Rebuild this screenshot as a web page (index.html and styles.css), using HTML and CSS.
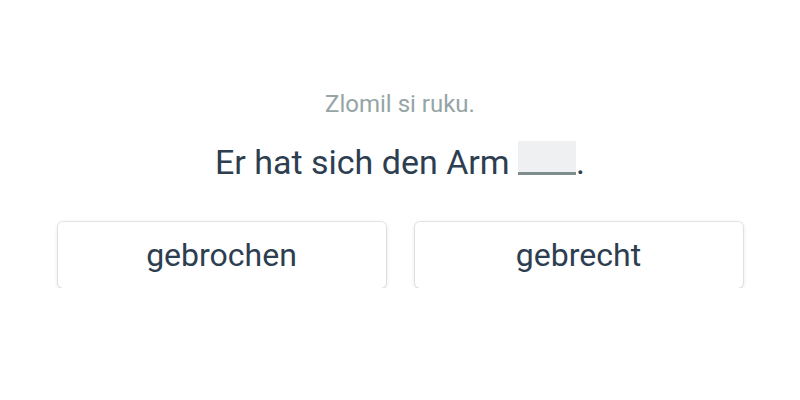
FILE: index.html
```html
<!DOCTYPE html>
<html lang="de">
<head>
  <meta charset="UTF-8">
  <meta name="viewport" content="width=device-width, initial-scale=1.0">
  <title>Cvičení</title>
  <link rel="stylesheet" href="styles.css">
</head>
<body>
  <main class="quiz">
    <p class="hint">Zlomil si ruku.</p>
    <p class="sentence">Er hat sich den Arm <span class="blank"></span>.</p>
    <div class="answers">
      <button class="answer">gebrochen</button>
      <button class="answer">gebrecht</button>
    </div>
  </main>
</body>
</html>
```

FILE: styles.css
```css
*{margin: 0px; padding: 0px; box-sizing: border-box;}
body{
  background: #fff;
  font-family: Roboto, "Liberation Sans", sans-serif;
  color: #2c3e50;
}
.quiz{
  width: 685px;
  margin: 0 auto;
  padding-top: 90px;
  text-align: center;
}
.hint{
  font-size: 24px;
  line-height: 28px;
  color: #95a5a6;
}
.sentence{
  margin-top: 22px;
  font-size: 34px;
  line-height: 44px;
}
/* 빈칸 */
.blank{
  display: inline-block;
  width: 58px; height: 34px;
  background: #eef0f2;
  border-bottom: 3px solid #7f8c8d;
  vertical-align: -1px;
}
.answers{
  margin-top: 38px;
  display: flex;
  gap: 29px;
}
.answer{
  flex: 1;
  height: 66px;
  background: #fff;
  border: none;
  border-radius: 5px;
  box-shadow: 0 0 0 1px rgba(0,0,0,0.07), 0 1px 4px rgba(0,0,0,0.15);
  font-family: inherit;
  font-size: 32px;
  color: #2c3e50;
  cursor: pointer;
}
```
